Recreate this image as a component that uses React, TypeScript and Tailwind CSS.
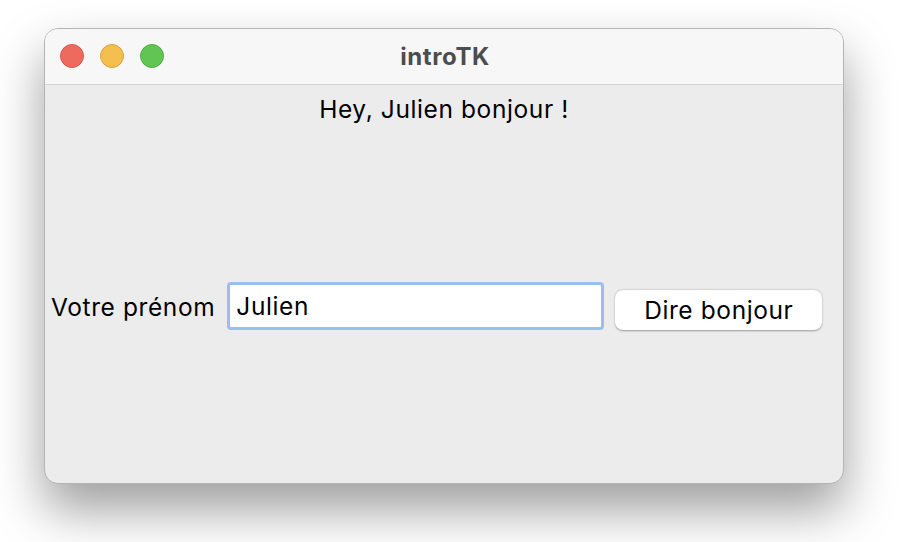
import React, { useState } from 'react';

export default function App() {
  const [name, setName] = useState('Julien');
  const [greeting, setGreeting] = useState('Hey, Julien bonjour !');

  return (
    <div className="w-[902px] h-[542px] bg-white overflow-hidden pt-[28px] pl-[44px] font-['Inter',sans-serif]">
      <div className="w-[800px] h-[456px] rounded-[14px] border border-[#b4b4b4] bg-[#ececec] flex flex-col overflow-hidden shadow-[0_26px_50px_rgba(0,0,0,0.38)]">
        {/* title bar */}
        <div className="relative h-[56px] shrink-0 bg-[#f7f7f7] border-b border-[#d4d4d4] flex items-center justify-center">
          <div className="absolute left-[15px] top-[15px] flex gap-[16px]">
            <span className="w-[24px] h-[24px] rounded-full bg-[#ee6a5e] border border-[#d85a4f]" />
            <span className="w-[24px] h-[24px] rounded-full bg-[#f5bf4f] border border-[#d9a33b]" />
            <span className="w-[24px] h-[24px] rounded-full bg-[#61c554] border border-[#4fad43]" />
          </div>
          <span className="ml-[2px] text-[24px] font-bold text-[#4d4d4d] tracking-[0.6px]">introTK</span>
        </div>

        {/* content */}
        <div className="flex flex-col items-center text-black text-[24.5px] tracking-[0.6px]">
          <p className="mt-[9px] leading-[30px]">{greeting}</p>
          <div className="mt-[158px] w-full flex items-center pl-[6px]">
            <span className="leading-[30px] pt-[2px]">Votre prénom</span>
            <input
              value={name}
              onChange={(e) => setName(e.target.value)}
              className="ml-[12px] w-[377px] h-[48px] bg-white border-[3px] border-[#9dbdf0] rounded-[4px] px-[6px] outline-none"
            />
            <button
              onClick={() => setGreeting(`Hey, ${name} bonjour !`)}
              className="ml-[11px] self-end w-[207px] h-[40px] bg-white rounded-[8px] shadow-[0_0.5px_2px_rgba(0,0,0,0.35)]"
            >
              Dire bonjour
            </button>
          </div>
        </div>
      </div>
    </div>
  );
}
